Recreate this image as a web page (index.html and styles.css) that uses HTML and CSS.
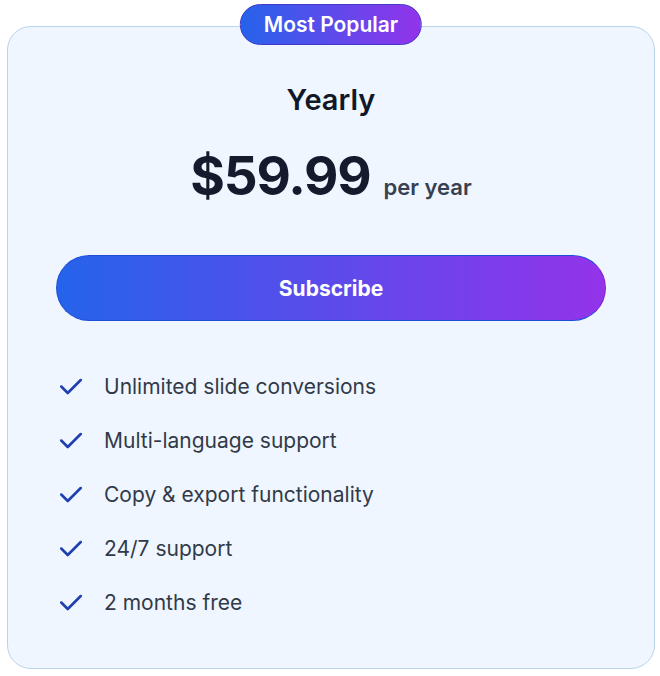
FILE: index.html
```html
<!DOCTYPE html>
<html>
<head>
<meta charset="utf-8">
<link rel="stylesheet" href="styles.css">
</head>
<body>
<div class="page">
  <div class="card">
    <div class="badge">Most Popular</div>
    <h2 class="title">Yearly</h2>
    <div class="price-row">
      <span class="price">$59.99</span>
      <span class="period">per year</span>
    </div>
    <button class="subscribe">Subscribe</button>
    <ul class="features">
      <li><svg class="check" viewBox="0 0 24 24"><path d="M3 12.5l6 6L21 6.5"/></svg><span>Unlimited slide conversions</span></li>
      <li><svg class="check" viewBox="0 0 24 24"><path d="M3 12.5l6 6L21 6.5"/></svg><span>Multi-language support</span></li>
      <li><svg class="check" viewBox="0 0 24 24"><path d="M3 12.5l6 6L21 6.5"/></svg><span>Copy &amp; export functionality</span></li>
      <li><svg class="check" viewBox="0 0 24 24"><path d="M3 12.5l6 6L21 6.5"/></svg><span>24/7 support</span></li>
      <li><svg class="check" viewBox="0 0 24 24"><path d="M3 12.5l6 6L21 6.5"/></svg><span>2 months free</span></li>
    </ul>
  </div>
</div>
</body>
</html>
```
FILE: styles.css
```css
* { box-sizing: border-box; }
html, body { margin: 0; padding: 0; background: #ffffff; }
body { font-family: Inter, "Noto Sans", sans-serif; }
.page { padding: 26px 5px 0 7px; }
.card {
  position: relative;
  width: 648px;
  height: 643px;
  background: #eff6ff;
  border: 1px solid #b9d4ea;
  border-radius: 24px;
  padding: 55px 48px 0 48px;
  display: flex;
  flex-direction: column;
  align-items: center;
}
.badge {
  position: absolute;
  top: -23px;
  left: 50%;
  transform: translateX(-50%);
  height: 41px;
  padding: 0 23px;
  display: flex;
  align-items: center;
  border-radius: 999px;
  background: linear-gradient(90deg, #2563eb, #9333ea);
  border: 1px solid #4338ca;
  color: #ffffff;
  font-size: 21px;
  font-weight: 600;
  white-space: nowrap;
}
.title {
  margin: 0;
  font-size: 29px;
  line-height: 36px;
  font-weight: 600;
  color: #111827;
}
.price-row {
  margin-top: 30px;
  display: flex;
  align-items: baseline;
  gap: 13px;
  padding-left: 0;
}
.price {
  font-size: 53px;
  line-height: 56px;
  font-weight: 700;
  color: #151b2d;
  letter-spacing: -1.2px;
}
.period {
  font-size: 22px;
  font-weight: 600;
  color: #374151;
}
.subscribe {
  margin-top: 51px;
  width: 550px;
  height: 66px;
  border-radius: 999px;
  border: 1.5px solid #1d4ed8;
  border-right-color: #7e22ce;
  background: linear-gradient(90deg, #2563eb, #9333ea);
  color: #ffffff;
  font-family: inherit;
  font-size: 21px;
  font-weight: 700;
  cursor: pointer;
}
.features {
  list-style: none;
  margin: 50px 0 0 0;
  padding: 0;
  width: 550px;
  display: flex;
  flex-direction: column;
  gap: 24px;
}
.features li {
  display: flex;
  align-items: center;
  height: 30px;
  font-size: 21px;
  color: #323a48;
}
.check {
  width: 26px;
  height: 26px;
  margin-left: 2px;
  margin-right: 20px;
  fill: none;
  stroke: #1e40af;
  stroke-width: 2.4;
  stroke-linecap: round;
  stroke-linejoin: round;
}
```
